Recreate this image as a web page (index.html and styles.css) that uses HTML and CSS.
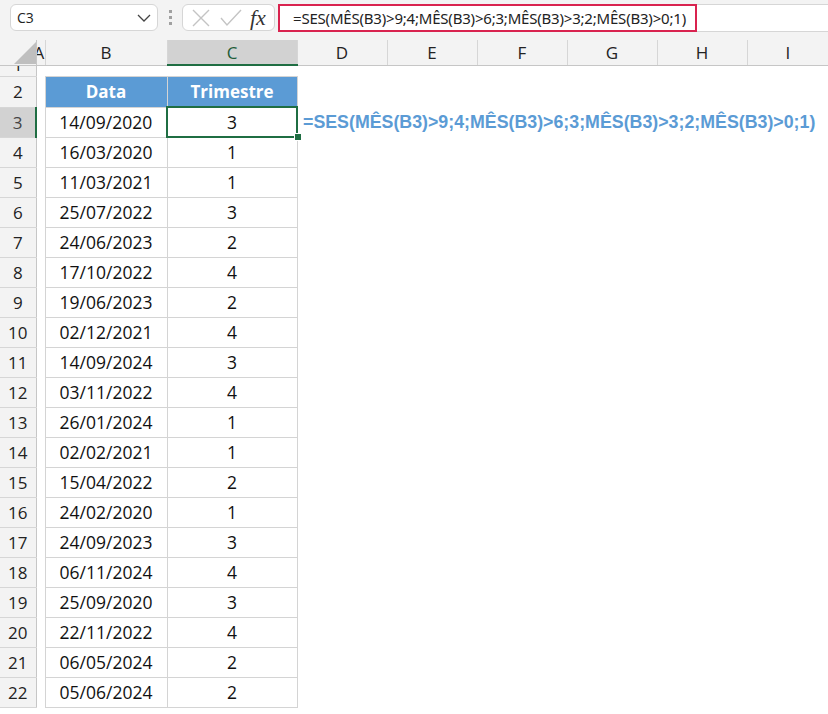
FILE: index.html
```html
<!DOCTYPE html>
<html lang="pt">

<head>
    <meta name="viewport" content="width=device-width, initial-scale=1.0">
    <link rel="stylesheet" href="styles.css">
</head>

<body>
    <div class="toolbar">
        <div class="namebox">
            <span>C3</span>
            <svg class="chevron" width="14" height="8" viewBox="0 0 14 8"><path d="M1 1 L7 7 L13 1" fill="none" stroke="#444" stroke-width="1.3"/></svg>
        </div>
        <div class="dots"><i></i><i></i><i></i></div>
        <div class="fxbox">
            <svg width="20" height="20" viewBox="0 0 20 20"><path d="M2 2 L18 18 M18 2 L2 18" stroke="#c4c4c4" stroke-width="1.4"/></svg>
            <svg width="24" height="20" viewBox="0 0 24 20"><path d="M2 10 L8 17 L22 2" fill="none" stroke="#c4c4c4" stroke-width="1.4"/></svg>
            <span class="fx">fx</span>
        </div>
        <div class="formula-bar">
            <div class="formula-input">=SES(MÊS(B3)&gt;9;4;MÊS(B3)&gt;6;3;MÊS(B3)&gt;3;2;MÊS(B3)&gt;0;1)</div>
        </div>
    </div>

    <table class="sheet">
        <colgroup>
            <col style="width:36px">
            <col style="width:9px">
            <col style="width:122px">
            <col style="width:130px">
            <col style="width:90px">
            <col style="width:90px">
            <col style="width:90px">
            <col style="width:90px">
            <col style="width:90px">
            <col style="width:81px">
        </colgroup>
        <thead>
            <tr class="col-heads">
                <th class="corner"><svg width="30" height="22" viewBox="0 0 30 22"><path d="M30 0 L30 22 L8 22 Z" fill="#bfbfbf"/></svg></th>
                <th class="col-a">A</th>
                <th>B</th>
                <th class="sel-col">C</th>
                <th>D</th>
                <th>E</th>
                <th>F</th>
                <th>G</th>
                <th>H</th>
                <th>I</th>
            </tr>
        </thead>
        <tbody id="rows">
            <tr class="row-one">
                <th class="row-head"><div class="clip"><span>1</span></div></th>
                <td colspan="9"></td>
            </tr>
            <tr>
                <th class="row-head">2</th>
                <td></td>
                <td class="tbl-head">Data</td>
                <td class="tbl-head">Trimestre</td>
                <td colspan="6"></td>
            </tr>
        </tbody>
    </table>

    <script>
        // dados da tabela: data e trimestre
        const data = [
            ['14/09/2020', 3], ['16/03/2020', 1], ['11/03/2021', 1], ['25/07/2022', 3],
            ['24/06/2023', 2], ['17/10/2022', 4], ['19/06/2023', 2], ['02/12/2021', 4],
            ['14/09/2024', 3], ['03/11/2022', 4], ['26/01/2024', 1], ['02/02/2021', 1],
            ['15/04/2022', 2], ['24/02/2020', 1], ['24/09/2023', 3], ['06/11/2024', 4],
            ['25/09/2020', 3], ['22/11/2022', 4], ['06/05/2024', 2], ['05/06/2024', 2]
        ];

        const rowsEl = document.getElementById('rows');

        data.forEach((item, i) => {
            const rowNum = i + 3;
            const tr = document.createElement('tr');
            const first = rowNum === 3;

            let html = `<th class="row-head${first ? ' sel-row' : ''}">${rowNum}</th><td></td>`;
            html += `<td class="cell">${item[0]}</td>`;
            if (first) {
                html += `<td class="cell active"><div class="active-wrap">${item[1]}<i class="handle"></i></div></td>`;
                html += `<td colspan="6"><div class="note">=SES(MÊS(B3)&gt;9;4;MÊS(B3)&gt;6;3;MÊS(B3)&gt;3;2;MÊS(B3)&gt;0;1)</div></td>`;
            } else {
                html += `<td class="cell">${item[1]}</td><td colspan="6"></td>`;
            }
            tr.innerHTML = html;
            rowsEl.appendChild(tr);
        });
    </script>
</body>

</html>
```

FILE: styles.css
```css
body {
    margin: 0;
    background: #fff;
    font-family: "Open Sans", sans-serif;
    overflow: hidden;
}

.toolbar {
    display: flex;
    align-items: center;
    height: 40px;
    padding-bottom: 5px;
    box-sizing: border-box;
    background: #f3f3f3;
}

.namebox {
    display: flex;
    align-items: center;
    justify-content: space-between;
    box-sizing: border-box;
    width: 148px;
    height: 27px;
    margin-left: 10px;
    padding: 0 6px 0 6px;
    background: #fff;
    border: 1px solid #d6d6d6;
    border-radius: 6px;
    font-size: 14px;
    color: #222;
}

.dots {
    display: flex;
    flex-direction: column;
    gap: 3px;
    margin: 0 10px 0 11px;
}

.dots i {
    width: 3px;
    height: 3px;
    background: #a0a0a0;
}

.fxbox {
    display: flex;
    align-items: center;
    gap: 8px;
    box-sizing: border-box;
    width: 93px;
    height: 27px;
    padding-left: 8px;
    background: #fff;
    border: 1px solid #d6d6d6;
    border-radius: 6px;
}

.fx {
    font-family: "Liberation Serif", serif;
    font-style: italic;
    font-size: 22px;
    line-height: 22px;
    color: #333;
    margin-left: -1px;
}

.formula-bar {
    flex: 1;
    height: 28px;
    margin-left: 5px;
    box-sizing: border-box;
    background: #fff;
    border-top: 1px solid #d6d6d6;
    border-bottom: 1px solid #d6d6d6;
    display: flex;
    align-items: center;
}

.formula-input {
    box-sizing: border-box;
    width: 419px;
    height: 28px;
    margin-left: -2px;
    padding-left: 13px;
    border: 2px solid #d9234f;
    font-family: "Noto Sans", sans-serif;
    font-size: 15px;
    line-height: 24px;
    letter-spacing: -0.2px;
    color: #222;
    white-space: nowrap;
}

.sheet {
    border-collapse: collapse;
    table-layout: fixed;
    width: 828px;
}

.sheet th,
.sheet td {
    padding: 0;
}

.col-heads th {
    height: 24px;
    background: #f3f3f3;
    border-bottom: 1px solid #c6c6c6;
    border-left: 1px solid #d6d6d6;
    font-weight: normal;
    font-size: 17px;
    color: #222;
    overflow: hidden;
    white-space: nowrap;
}

.col-heads .corner {
    border-left: none;
    border-right: 1px solid #c6c6c6;
    text-align: right;
    vertical-align: bottom;
}

.corner svg {
    display: block;
    margin-left: auto;
    margin-bottom: 1px;
}

.col-heads .col-a {
    text-align: left;
    text-indent: -3px;
}

.col-heads .sel-col {
    background: #d2d2d2;
    border-bottom: 2px solid #1f6e43;
    color: #1f5c38;
}

.row-head {
    background: #f3f3f3;
    border-right: 1px solid #c6c6c6;
    border-bottom: 1px solid #d6d6d6;
    font-weight: normal;
    font-size: 17px;
    color: #222;
    height: 29px;
}

.row-head.sel-row {
    background: #d2d2d2;
    border-right: 2px solid #1f6e43;
    color: #444;
}

.row-one .row-head {
    height: 10px;
}

.row-one td {
    height: 10px;
}

.clip {
    height: 10px;
    overflow: hidden;
    line-height: 10px;
}

.clip span {
    display: block;
    margin-top: -11px;
    line-height: 20px;
}

.tbl-head {
    height: 29px;
    background: #5b9bd5;
    border: 1px solid #d4d4d4;
    color: #fff;
    font-weight: bold;
    font-size: 17px;
    text-align: center;
}

.cell {
    height: 28px;
    border: 1px solid #d4d4d4;
    font-size: 17.5px;
    color: #111;
    text-align: center;
}

.cell.active {
    border: 2px solid #1f6e43;
}

.active-wrap {
    position: relative;
}

.handle {
    position: absolute;
    right: -6px;
    bottom: -7px;
    width: 6px;
    height: 6px;
    background: #1f6e43;
    border: 1px solid #fff;
}

.note {
    width: 0;
    white-space: nowrap;
    padding-left: 5px;
    font-family: "Liberation Sans", sans-serif;
    font-weight: bold;
    font-size: 17.8px;
    color: #5b9bd5;
}
```
